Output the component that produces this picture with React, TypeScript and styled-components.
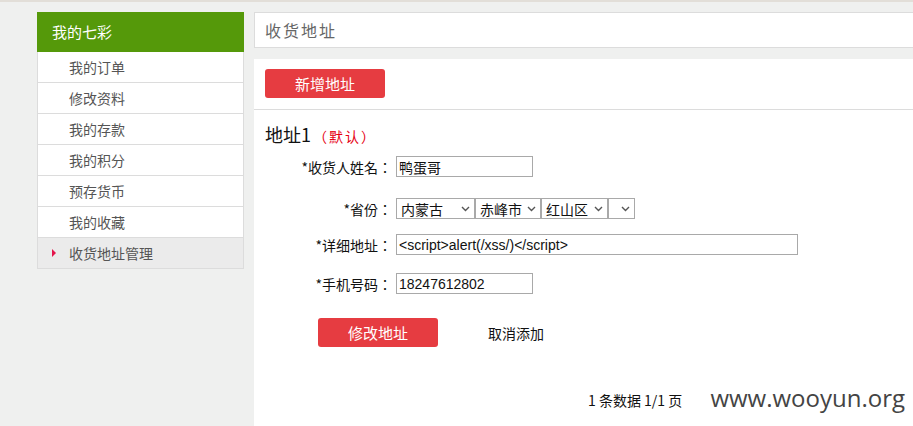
import React from 'react'
import styled, { createGlobalStyle } from 'styled-components'

const GlobalStyle = createGlobalStyle`
    html, body {
        margin: 0;
        padding: 0;
        background: #eff0ef;
        overflow: hidden;
    }
    body {
        border-top: 2px solid #e2ded8;
        font-family: "Noto Sans CJK SC", "Noto Sans", sans-serif;
        font-size: 14px;
        color: #222;
    }
`

const Page = styled.div`
    display: flex;
    align-items: flex-start;
    gap: 10px;
    padding: 10px 0 0 37px;
    height: 424px;
    box-sizing: border-box;
    position: relative;
`

const Sidebar = styled.div`
    width: 207px;
    flex-shrink: 0;
    display: flex;
    flex-direction: column;
`

const SideHeader = styled.div`
    height: 40px;
    line-height: 40px;
    background: #55990a;
    color: #fff;
    font-size: 15px;
    padding-left: 15px;
`

const SideItem = styled.div<{ $active?: boolean }>`
    height: 30px;
    display: flex;
    align-items: center;
    padding-left: 14px;
    gap: 13px;
    background: ${(p) => (p.$active ? '#ebebeb' : '#fff')};
    border: 1px solid #dcdcdc;
    border-top: none;
    color: #555;
    font-size: 14px;
`

const Arrow = styled.span<{ $show?: boolean }>`
    width: 0;
    height: 0;
    border-top: 4px solid transparent;
    border-bottom: 4px solid transparent;
    border-left: 4px solid ${(p) => (p.$show ? '#e4144b' : 'transparent')};
`

const Main = styled.div`
    width: 680px;
    flex-shrink: 0;
    display: flex;
    flex-direction: column;
    gap: 11px;
    align-self: stretch;
`

const TitleBox = styled.div`
    height: 34px;
    line-height: 34px;
    background: #fff;
    border: 1px solid #dcdcdc;
    padding-left: 10px;
    font-size: 16px;
    letter-spacing: 2px;
    color: #666;
`

const Panel = styled.div`
    flex: 1;
    background: #fff;
    display: flex;
    flex-direction: column;
`

const AddBar = styled.div`
    height: 40px;
    padding: 10px 11px 0;
    border-bottom: 1px solid #dcdcdc;
`

const RedButton = styled.button`
    width: 120px;
    height: 29px;
    border: none;
    border-radius: 3px;
    background: #e63c41;
    color: #fff;
    font-family: inherit;
    font-size: 15px;
    padding: 0;
    cursor: pointer;
`

const Heading = styled.div`
    margin: 12px 0 0 11px;
    line-height: 24px;
    font-size: 18px;
    color: #111;
`

const Default = styled.span`
    font-size: 14px;
    color: #e60012;
    margin-left: 2px;
    letter-spacing: 2px;
`

const Row = styled.div<{ $mt: number }>`
    display: flex;
    align-items: center;
    margin-top: ${(p) => p.$mt}px;
`

const Label = styled.div`
    width: 138px;
    margin-right: 4px;
    text-align: right;
    font-family: "Noto Sans CJK JP", "Noto Sans CJK SC", sans-serif;
    font-size: 14px;
    color: #111;
`

const Input = styled.input<{ $w: number }>`
    box-sizing: border-box;
    width: ${(p) => p.$w}px;
    height: 21px;
    border: 1px solid #a9a9a9;
    padding: 0 2px;
    font-family: "Liberation Sans", "Noto Sans CJK SC", sans-serif;
    font-size: 14px;
    color: #111;
    outline: none;
`

const Selects = styled.div`
    display: flex;
    align-items: center;
`

const SelectBox = styled.div<{ $w: number }>`
    box-sizing: border-box;
    width: ${(p) => p.$w}px;
    height: 21px;
    border: 1px solid #a9a9a9;
    display: flex;
    align-items: center;
    justify-content: space-between;
    padding: 0 4px 0 4px;
    font-size: 14px;
    color: #111;
    background: #fff;
`

const Actions = styled.div`
    display: flex;
    align-items: center;
    margin: 24px 0 0 64px;
    gap: 50px;
`

const CancelLink = styled.span`
    font-size: 14px;
    color: #111;
`

const Pager = styled.div`
    margin: 43px 0 0 334px;
    font-size: 14px;
    color: #111;
    line-height: 20px;
`

const Watermark = styled.div`
    position: absolute;
    right: 8px;
    bottom: 12px;
    font-family: "Open Sans", "DejaVu Sans", sans-serif;
    font-size: 24px;
    color: #444;
`

const Chevron = () => (
    <svg width="9" height="6" viewBox="0 0 9 6">
        <path d="M1 1 L4.5 4.5 L8 1" fill="none" stroke="#555" strokeWidth="1.4" />
    </svg>
)

const menu = ['我的订单', '修改资料', '我的存款', '我的积分', '预存货币', '我的收藏', '收货地址管理']

const regions = [
    { name: '内蒙古', w: 79 },
    { name: '赤峰市', w: 66 },
    { name: '红山区', w: 67 },
    { name: '', w: 27 },
]

export default function App() {
    return (
        <>
            <GlobalStyle />
            <Page>
                <Sidebar>
                    <SideHeader>我的七彩</SideHeader>
                    {menu.map((item, i) => (
                        <SideItem key={item} $active={i === menu.length - 1}>
                            <Arrow $show={i === menu.length - 1} />
                            {item}
                        </SideItem>
                    ))}
                </Sidebar>
                <Main>
                    <TitleBox>收货地址</TitleBox>
                    <Panel>
                        <AddBar>
                            <RedButton>新增地址</RedButton>
                        </AddBar>
                        <Heading>
                            地址1<Default>（默认）</Default>
                        </Heading>
                        <Row $mt={8}>
                            <Label>*收货人姓名：</Label>
                            <Input $w={137} defaultValue="鸭蛋哥" />
                        </Row>
                        <Row $mt={21}>
                            <Label>*省份：</Label>
                            <Selects>
                                {regions.map((r, i) => (
                                    <SelectBox key={i} $w={r.w}>
                                        <span>{r.name}</span>
                                        <Chevron />
                                    </SelectBox>
                                ))}
                            </Selects>
                        </Row>
                        <Row $mt={15}>
                            <Label>*详细地址：</Label>
                            <Input $w={402} defaultValue="<script>alert(/xss/)</script>" />
                        </Row>
                        <Row $mt={18}>
                            <Label>*手机号码：</Label>
                            <Input $w={137} defaultValue="18247612802" />
                        </Row>
                        <Actions>
                            <RedButton>修改地址</RedButton>
                            <CancelLink>取消添加</CancelLink>
                        </Actions>
                        <Pager>1 条数据 1/1 页</Pager>
                    </Panel>
                </Main>
                <Watermark>www.wooyun.org</Watermark>
            </Page>
        </>
    )
}
